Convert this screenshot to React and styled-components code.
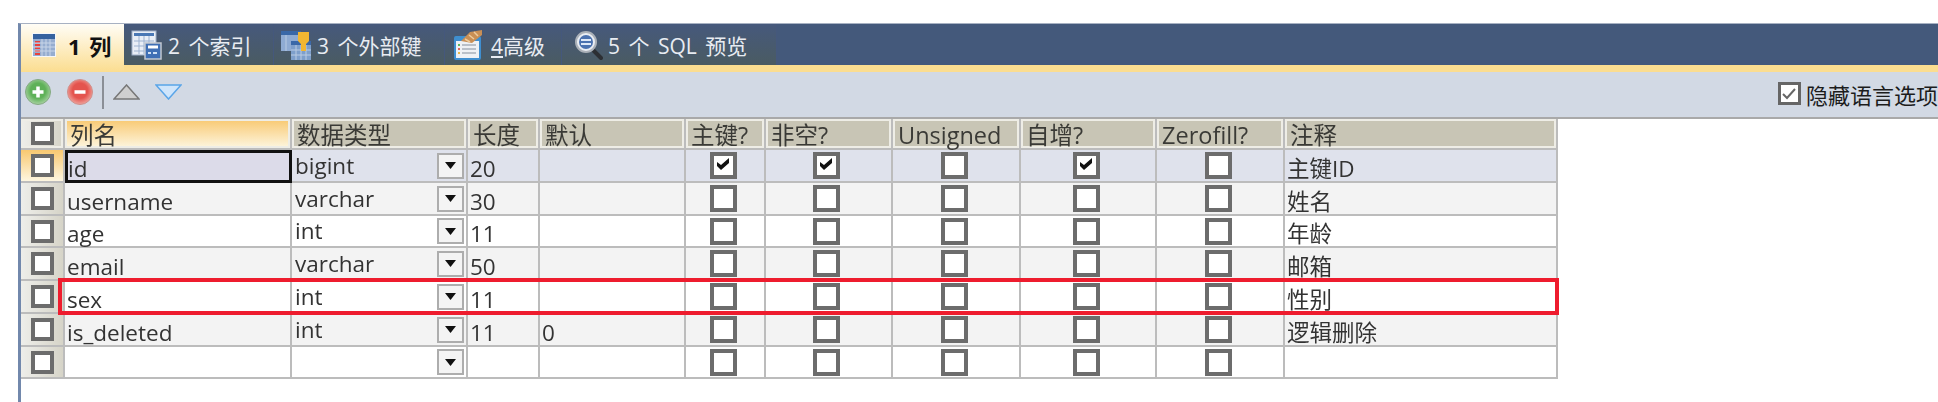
import React from 'react';
import styled, { createGlobalStyle } from 'styled-components';

const FONT = '"Open Sans", "Noto Sans CJK SC", sans-serif';

const GlobalStyle = createGlobalStyle`
  html, body {
    margin: 0;
    padding: 0;
    background: #fff;
    overflow: hidden;
  }
`;

const Frame = styled.div`
  margin: 23px 0 0 18px;
  height: 379px;
  border-left: 3px solid #7288ac;
  border-top: 1px solid #a7b1c2;
  font-family: ${FONT};
  color: #333;
  filter: blur(0.45px);
`;

const TabBar = styled.div`
  display: flex;
  height: 41px;
  background: #44597b;
`;

const Tab = styled.div`
  display: flex;
  align-items: center;
  width: ${p => p.$width}px;
  height: ${p => (p.$active ? 48 : 41)}px;
  box-sizing: border-box;
  padding-left: ${p => p.$pad}px;
  padding-bottom: ${p => (p.$active ? 7 : 0)}px;
  gap: ${p => p.$gap}px;
  font-size: ${p => (p.$active ? 22 : 21)}px;
  word-spacing: 3px;
  white-space: nowrap;
  color: ${p => (p.$active ? '#111' : '#e8ecf2')};
  font-weight: ${p => (p.$active ? 700 : 400)};
  border-right: ${p => (p.$active ? 'none' : '1px solid #45587c')};
  background: ${p => (p.$active
    ? 'linear-gradient(#fffdf6, #fbdd90)'
    : 'linear-gradient(#46597c, #4a5b62)')};
  position: relative;
  z-index: 1;
`;

const GoldStrip = styled.div`
  height: 7px;
  background: #fbdd90;
`;

const Toolbar = styled.div`
  display: flex;
  align-items: center;
  height: 45px;
  box-sizing: content-box;
  background: #d2d9e4;
  padding-left: 4px;
  border-bottom: 2px solid #a9a9a9;
`;

const ToolGroup = styled.div`
  display: flex;
  align-items: center;
  margin-bottom: 5px;
`;

const ToolIcon = styled.svg`
  flex: none;
  margin-right: ${p => p.$gap || 0}px;
`;

const Separator = styled.div`
  width: 2px;
  height: 33px;
  margin-right: 9px;
  background: #8b8f96;
`;

const LangOption = styled.label`
  display: flex;
  align-items: center;
  gap: 5px;
  margin-left: auto;
  margin-bottom: 2px;
  font-size: 22px;
  color: #1c1c1c;
  white-space: nowrap;
`;

const LangBox = styled.span`
  display: flex;
  align-items: center;
  justify-content: center;
  width: 23px;
  height: 23px;
  box-sizing: border-box;
  border: 3px solid #666;
  background: #fff;
`;

const TableWrap = styled.div`
  position: relative;
  width: 1537px;
`;

const Table = styled.div`
  display: grid;
  grid-template-columns: 44px 227px 176px 72px 146px 80px 127px 128px 136px 128px 273px;
  grid-template-rows: 31px 33px 33px 32px 33px 33px 33px 32px;
`;

const Cell = styled.div`
  box-sizing: border-box;
  display: flex;
  min-width: 0;
  border-right: 2px solid #bcbcbc;
  border-bottom: 2px solid #bcbcbc;
`;

const HeaderCell = styled(Cell)`
  align-items: center;
  padding: 2px 0 0 5px;
  font-size: 23.5px;
  line-height: 26px;
  white-space: nowrap;
  color: #3a3a36;
  background: ${p => (p.$active ? 'linear-gradient(#f8c870, #fdf6e0)' : '#c8c5b5')};
  box-shadow: inset 0 0 0 2px #eeede6;
`;

const CornerCell = styled(Cell)`
  align-items: center;
  justify-content: center;
  background: linear-gradient(90deg, #eeeeea, #d6d4c8);
  box-shadow: inset 0 0 0 2px #eeede6;
`;

const RowHead = styled(Cell)`
  align-items: center;
  justify-content: center;
  background: ${p => (p.$active
    ? 'linear-gradient(#f8c870, #fdf6e0)'
    : 'linear-gradient(90deg, #eeeeea, #d6d4c8)')};
`;

const rowBg = p => (p.$row === 0 ? '#dfe2ec' : p.$row % 2 === 1 ? '#f3f3f3' : '#fff');

const TextCell = styled(Cell)`
  align-items: center;
  padding: 6px 0 0 2px;
  font-size: 22.5px;
  line-height: 26px;
  white-space: nowrap;
  background: ${rowBg};
`;

const SelectedCell = styled(TextCell)`
  background: #dcdbe9;
  outline: 3px solid #111;
  outline-offset: -3px;
  padding-left: 3px;
`;

const TypeCell = styled(TextCell)`
  justify-content: space-between;
  padding: 0 2px 0 3px;
`;

const DropButton = styled.span`
  flex: none;
  display: flex;
  align-items: center;
  justify-content: center;
  width: 27px;
  height: 26px;
  box-sizing: border-box;
  border: 2px solid #adadad;
  background: #f4f4f4;
`;

const CheckCell = styled(Cell)`
  align-items: center;
  justify-content: center;
  padding-right: 4px;
  background: ${rowBg};
`;

const CheckBox = styled.span`
  flex: none;
  display: flex;
  align-items: center;
  justify-content: center;
  width: ${p => p.$size || 27}px;
  height: ${p => p.$size || 27}px;
  box-sizing: border-box;
  border: 4px solid #6c6c6c;
  background: #fff;
`;

const Highlight = styled.div`
  position: absolute;
  left: 37px;
  top: 159px;
  width: 1501px;
  height: 37px;
  box-sizing: border-box;
  border: 4px solid #ee1c2e;
  pointer-events: none;
`;

const COLUMNS = [
  { title: '列名', active: true },
  { title: '数据类型' },
  { title: '长度' },
  { title: '默认' },
  { title: '主键?' },
  { title: '非空?' },
  { title: 'Unsigned' },
  { title: '自增?' },
  { title: 'Zerofill?' },
  { title: '注释' },
];

const ROWS = [
  { name: 'id', type: 'bigint', len: '20', def: '', pk: true, nn: true, ai: true, note: '主键ID' },
  { name: 'username', type: 'varchar', len: '30', def: '', note: '姓名' },
  { name: 'age', type: 'int', len: '11', def: '', note: '年龄' },
  { name: 'email', type: 'varchar', len: '50', def: '', note: '邮箱' },
  { name: 'sex', type: 'int', len: '11', def: '', note: '性别' },
  { name: 'is_deleted', type: 'int', len: '11', def: '0', note: '逻辑删除' },
  { name: '', type: '', len: '', def: '', note: '' },
];

const Check = () => (
  <svg width="19" height="19" viewBox="0 0 19 19">
    <path d="M3 6 L7 9 L15 2 L15 7 L7 14 L3 10 Z" fill="#111" />
  </svg>
);

const TableIcon = () => (
  <svg width="24" height="24" viewBox="0 0 24 24">
    <rect x="0" y="0" width="24" height="24" fill="#f4f6fa" />
    <rect x="1" y="1" width="22" height="5" fill="#35629f" />
    <rect x="1" y="6" width="22" height="17" fill="#96add0" />
    <path d="M3 9h5M3 12h5M3 15h5M3 18h5M3 21h5" stroke="#e8413c" strokeWidth="2" />
    <path d="M10 6v17M14 6v17M18 6v17M1 10h22M1 14h22M1 18h22" stroke="#c8d5e8" strokeWidth="1" />
  </svg>
);

const IndexIcon = () => (
  <svg width="31" height="30" viewBox="0 0 31 30">
    <rect x="1" y="1" width="24" height="24" fill="#e9eef6" stroke="#9fb0c9" />
    <rect x="3" y="3" width="20" height="3" fill="#4a78b5" />
    <path d="M8 6v18M13 6v18M18 6v18M3 11h20M3 16h20M3 21h20" stroke="#9db2d0" />
    <rect x="14" y="13" width="16" height="16" fill="#3f6fb5" stroke="#c2c8d0" strokeWidth="1.5" />
    <path d="M17 17h10" stroke="#fff" strokeWidth="3" />
    <path d="M17 23h3M22 23h4" stroke="#cfe0f5" strokeWidth="2" />
  </svg>
);

const ForeignIcon = () => (
  <svg width="31" height="30" viewBox="0 0 31 30">
    <rect x="0" y="1" width="20" height="20" fill="#8fabd3" />
    <rect x="0" y="1" width="20" height="4" fill="#3a68a8" />
    <rect x="10" y="11" width="20" height="19" fill="#7e9fcb" />
    <rect x="10" y="11" width="20" height="4" fill="#3a68a8" />
    <path d="M5 5v16M15 15v15M20 15v15M25 15v15M10 20h20M10 25h20" stroke="#b9cbe3" />
    <path d="M17 2h11v9l-3 3v7h-5V14l-3-3z" fill="#f2b632" />
  </svg>
);

const AdvancedIcon = () => (
  <svg width="30" height="30" viewBox="0 0 30 30">
    <rect x="1" y="7" width="25" height="22" rx="1" fill="#eef1f5" stroke="#3f8fd0" strokeWidth="2" />
    <rect x="1" y="7" width="25" height="4" fill="#3f8fd0" />
    <path d="M4 15h2" stroke="#5cb85c" strokeWidth="2" />
    <path d="M4 19h2" stroke="#e0655a" strokeWidth="2" />
    <path d="M4 23h2" stroke="#e9b949" strokeWidth="2" />
    <path d="M8 15h14M8 19h14M8 23h14" stroke="#b9c0c9" strokeWidth="2" />
    <path d="M7 11 L16 2 L28 0 L28 5 L18 13 Z" fill="#c98f55" />
    <path d="M11 9l5 3M15 5l5 4M20 2l4 4" stroke="#eecb9c" strokeWidth="1.5" />
  </svg>
);

const PreviewIcon = () => (
  <svg width="28" height="30" viewBox="0 0 28 30">
    <path d="M17 19 L26 28" stroke="#2c2f33" strokeWidth="4" strokeLinecap="round" />
    <circle cx="11" cy="12" r="10" fill="#e9edf3" stroke="#aab0b8" strokeWidth="2" />
    <circle cx="11" cy="12" r="7" fill="#4b72b0" />
    <path d="M6 10h10M6 14h10" stroke="#dfe9f7" strokeWidth="2" />
  </svg>
);

const RoundButton = ({ id, inner, outer, edge, plus, gap }) => (
  <ToolIcon $gap={gap} width="26" height="26" viewBox="0 0 26 26">
    <defs>
      <radialGradient id={id} cx="50%" cy="45%" r="55%">
        <stop offset="55%" stopColor={inner} />
        <stop offset="100%" stopColor={outer} />
      </radialGradient>
    </defs>
    <circle cx="13" cy="13" r="12.5" fill={`url(#${id})`} stroke={edge} />
    <path d={plus ? 'M13 7.5v11M7.5 13h11' : 'M7.5 13h11'} stroke="#fff" strokeWidth="3.5" />
  </ToolIcon>
);

export default function App() {
  const tabs = [
    { label: '1 列', width: 103, pad: 11, gap: 12, icon: <TableIcon />, active: true },
    { label: '2 个索引', width: 150, pad: 7, gap: 6, icon: <IndexIcon /> },
    { label: '3 个外部键', width: 171, pad: 7, gap: 5, icon: <ForeignIcon /> },
    { label: <><u>4</u>高级</>, width: 117, pad: 9, gap: 7, icon: <AdvancedIcon /> },
    { label: '5 个 SQL 预览', width: 215, pad: 13, gap: 5, icon: <PreviewIcon /> },
  ];

  return (
    <>
      <GlobalStyle />
      <Frame>
        <TabBar>
          {tabs.map((tab, i) => (
            <Tab key={i} $width={tab.width} $pad={tab.pad} $gap={tab.gap} $active={tab.active}>
              {tab.icon}
              <span>{tab.label}</span>
            </Tab>
          ))}
        </TabBar>
        <GoldStrip />
        <Toolbar>
          <ToolGroup>
            <RoundButton id="addFill" inner="#5fb158" outer="#a9d3a3" edge="#84a982" plus gap={16} />
            <RoundButton id="delFill" inner="#e4544e" outer="#f0a39c" edge="#cf8f8a" gap={9} />
            <Separator />
            <ToolIcon $gap={15} width="27" height="16" viewBox="0 0 27 16">
              <path d="M13.5 1 L26 15 H1 Z" fill="#cfcfcf" stroke="#777" strokeWidth="1.5" />
            </ToolIcon>
            <ToolIcon width="27" height="16" viewBox="0 0 27 16">
              <path d="M1 1 H26 L13.5 15 Z" fill="#cfe5fb" stroke="#5aa5e8" strokeWidth="1.5" />
            </ToolIcon>
          </ToolGroup>
          <LangOption>
            <LangBox>
              <svg width="16" height="16" viewBox="0 0 16 16">
                <path d="M2 8 L6 12 L14 3" fill="none" stroke="#666" strokeWidth="2" />
              </svg>
            </LangBox>
            隐藏语言选项
          </LangOption>
        </Toolbar>
        <TableWrap>
          <Table>
            <CornerCell><CheckBox $size={23} /></CornerCell>
            {COLUMNS.map(col => (
              <HeaderCell key={col.title} $active={col.active}>{col.title}</HeaderCell>
            ))}
            {ROWS.map((row, r) => (
              <React.Fragment key={r}>
                <RowHead $active={r === 0}><CheckBox $size={23} /></RowHead>
                {r === 0
                  ? <SelectedCell $row={r}>{row.name}</SelectedCell>
                  : <TextCell $row={r}>{row.name}</TextCell>}
                <TypeCell $row={r}>
                  <span>{row.type}</span>
                  <DropButton>
                    <svg width="11" height="7" viewBox="0 0 11 7"><path d="M0 0h11L5.5 7z" fill="#111" /></svg>
                  </DropButton>
                </TypeCell>
                <TextCell $row={r}>{row.len}</TextCell>
                <TextCell $row={r}>{row.def}</TextCell>
                <CheckCell $row={r}><CheckBox>{row.pk && <Check />}</CheckBox></CheckCell>
                <CheckCell $row={r}><CheckBox>{row.nn && <Check />}</CheckBox></CheckCell>
                <CheckCell $row={r}><CheckBox /></CheckCell>
                <CheckCell $row={r}><CheckBox>{row.ai && <Check />}</CheckBox></CheckCell>
                <CheckCell $row={r}><CheckBox /></CheckCell>
                <TextCell $row={r}>{row.note}</TextCell>
              </React.Fragment>
            ))}
          </Table>
          <Highlight />
        </TableWrap>
      </Frame>
    </>
  );
}
